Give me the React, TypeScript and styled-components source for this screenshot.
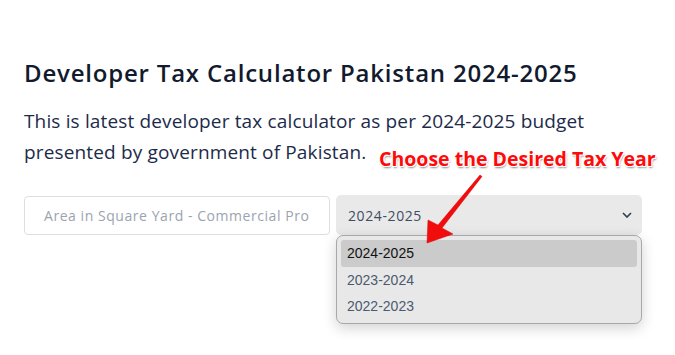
import styled, { createGlobalStyle } from 'styled-components';

const GlobalStyle = createGlobalStyle`
  body {
    margin: 0;
    background: #ffffff;
    font-family: 'Open Sans', 'Liberation Sans', sans-serif;
  }
`;

const Page = styled.div`
  position: relative;
  width: 675px;
  height: 355px;
  padding: 56px 24px 0;
  box-sizing: border-box;
`;

const Title = styled.h1`
  margin: 0;
  font-size: 24px;
  line-height: 33px;
  font-weight: 600;
  color: #111a2e;
  letter-spacing: 0.8px;
`;

const Lead = styled.p`
  margin: 17px 0 0;
  font-size: 19px;
  line-height: 31px;
  letter-spacing: 0.15px;
  color: #1c2b4a;
`;

const Row = styled.div`
  display: grid;
  grid-template-columns: 306px 306px;
  gap: 6px;
  margin-top: 28px;
`;

const FieldBox = styled.label`
  display: flex;
  align-items: center;
  box-sizing: border-box;
  height: 39px;
  padding: 0 19px;
  border: 1.5px solid #dedede;
  border-radius: 4px;
  background: #fff;
`;

const FieldInput = styled.input`
  width: 100%;
  min-width: 0;
  padding: 0;
  border: none;
  background: transparent;
  font-family: inherit;
  font-size: 14px;
  letter-spacing: 0.55px;
  color: #333;
  outline: none;
  &::placeholder {
    color: #9ba3b0;
  }
`;

const SelectWrap = styled.div`
  position: relative;
  height: 40px;
  margin-top: -1px;
`;

const SelectBox = styled.div`
  display: flex;
  align-items: center;
  justify-content: space-between;
  height: 100%;
  padding: 0 10px 0 12px;
  background: #e9e9e9;
  border-radius: 5px;
  font-size: 14px;
  letter-spacing: 0.6px;
  color: #3f4d63;
`;

const Menu = styled.ul`
  position: absolute;
  top: 40px;
  left: 0;
  width: 306px;
  box-sizing: border-box;
  margin: 0;
  padding: 4px 4px 3px;
  list-style: none;
  background: #e8e8e8;
  border: 1px solid #a8a8a8;
  border-radius: 7px;
  box-shadow: 0 4px 14px rgba(0, 0, 0, 0.18);
  font-family: 'Liberation Sans', Arial, sans-serif;
  font-size: 14px;
`;

const Option = styled.li<{ $active?: boolean }>`
  height: 26.5px;
  line-height: 26.5px;
  padding: 0 6px;
  border-radius: 3px;
  background: ${(p) => (p.$active ? '#cbcbcb' : 'transparent')};
  color: ${(p) => (p.$active ? '#111111' : '#4b5a70')};
`;

const Callout = styled.div`
  position: absolute;
  left: 379px;
  top: 145px;
  font-family: 'Open Sans', 'Liberation Sans', sans-serif;
  font-weight: 700;
  font-size: 19.5px;
  color: #ff0a0a;
  white-space: nowrap;
  text-shadow:
    -1px -1px 0 #fff, 1px -1px 0 #fff, -1px 1px 0 #fff, 1px 1px 0 #fff,
    1px 2px 2px rgba(0, 0, 0, 0.45);
`;

const Pointer = styled.svg`
  position: absolute;
  left: 420px;
  top: 170px;
  overflow: visible;
`;

const years = ['2024-2025', '2023-2024', '2022-2023'];

export default function App() {
  return (
    <Page>
      <GlobalStyle />
      <Title>Developer Tax Calculator Pakistan 2024-2025</Title>
      <Lead>
        This is latest developer tax calculator as per 2024-2025 budget
        <br />
        presented by government of Pakistan.
      </Lead>
      <Row>
        <FieldBox>
          <FieldInput placeholder="Area in Square Yard - Commercial Property" />
        </FieldBox>
        <SelectWrap>
          <SelectBox>
            <span>2024-2025</span>
            <svg width="10" height="6" viewBox="0 0 10 6">
              <path d="M1 1l4 4 4-4" fill="none" stroke="#2f3b52" strokeWidth="1.6" />
            </svg>
          </SelectBox>
          <Menu>
            {years.map((y, i) => (
              <Option key={y} $active={i === 0}>
                {y}
              </Option>
            ))}
          </Menu>
        </SelectWrap>
      </Row>
      <Callout>Choose the Desired Tax Year</Callout>
      <Pointer width="70" height="80" viewBox="0 0 70 80">
        <path
          d="M60 5 L62 6.5 L22 58 L33 64 L7 73 L8 50 L18 55 Z"
          fill="#f20d0d"
          stroke="#d00"
          strokeWidth="0.5"
          strokeLinejoin="round"
        />
      </Pointer>
    </Page>
  );
}
